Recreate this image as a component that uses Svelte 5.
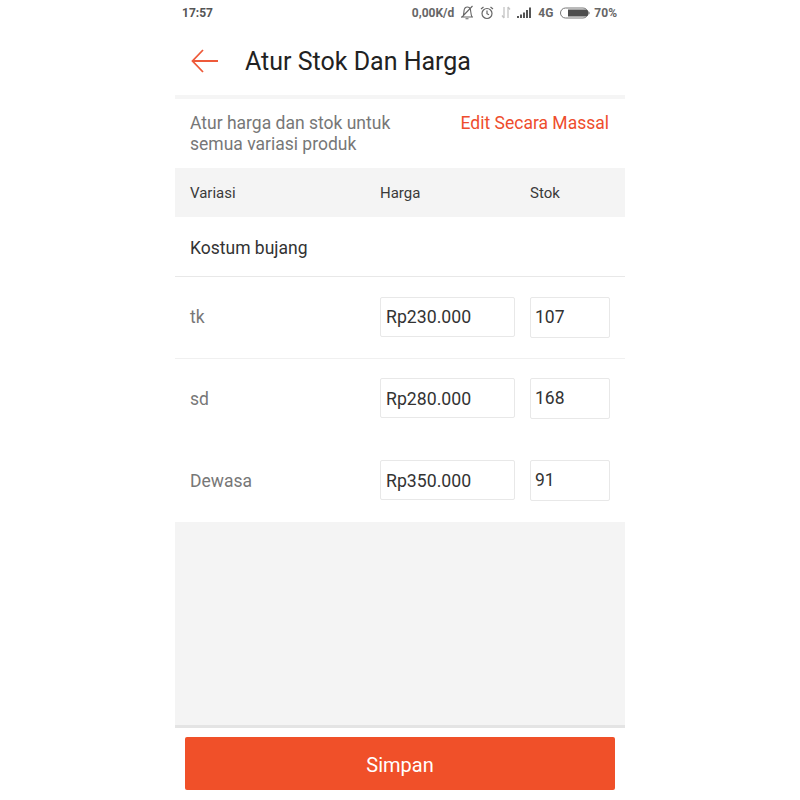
<script>
  const rows = [
    { name: 'tk', price: 'Rp230.000', stock: '107', kind: 'line' },
    { name: 'sd', price: 'Rp280.000', stock: '168', kind: '' },
    { name: 'Dewasa', price: 'Rp350.000', stock: '91', kind: 'last' }
  ];
</script>

<div class="phone">
  <div class="status">
    <span class="time">17:57</span>
    <div class="status-right">
      <span>0,00K/d</span>
      <svg class="ic bell" width="14" height="15" viewBox="0 0 14 15" fill="none" stroke="#666" stroke-width="1.100">
        <path d="M1 12h12M2.500 12c1.500-2 1.300-4 1.500-6 .2-2.500 1.500-4 3.500-4 1.300 0 2.300.7 2.800 2 .5 1.500.3 5 1.700 8M5.500 13.800h3M1.500 12.500 12.500 1" />
      </svg>
      <svg class="ic clock" width="14" height="14" viewBox="0 0 14 14" fill="none" stroke="#666" stroke-width="1.200">
        <circle cx="7" cy="7.500" r="5" />
        <path d="M7 4.500v3.200l2 1M1 3l2.500-2M13 3l-2.500-2" />
      </svg>
      <svg class="ic arrows" width="10" height="13" viewBox="0 0 10 13" fill="none" stroke="#c4c4c4" stroke-width="1.300">
        <path d="M3 1v11M3 12 1 9.500M7 12V1M7 1l2 2.500" />
      </svg>
      <svg class="ic sig" width="15" height="11" viewBox="0 0 15 11" fill="#555">
        <rect x="0" y="9" width="2" height="2" />
        <rect x="3" y="7.500" width="2" height="3.500" />
        <rect x="6" y="5.500" width="2" height="5.500" />
        <rect x="9" y="3" width="2" height="8" />
        <rect x="12" y="0.500" width="2" height="10.500" />
      </svg>
      <span class="net">4G</span>
      <svg class="ic batt" width="31" height="12" viewBox="0 0 31 12">
        <rect x="0.500" y="1" width="27.500" height="10" rx="5" fill="none" stroke="#777" />
        <path d="M8 2.500h17a3.500 3.500 0 0 1 0 7H8z" fill="#4d4d4d" />
        <path d="M29 4.500a2 2 0 0 1 0 3z" fill="#777" />
      </svg>
      <span class="pct">70%</span>
    </div>
  </div>

  <header class="appbar">
    <svg width="30" height="26" viewBox="0 0 30 26" fill="none" stroke="#ee5a3a" stroke-width="1.800">
      <path d="M2.500 13H28M13 2 2.500 13 13 24" />
    </svg>
    <h1>Atur Stok Dan Harga</h1>
  </header>

  <div class="intro">
    <p>Atur harga dan stok untuk<br />semua variasi produk</p>
    <span class="bulk">Edit Secara Massal</span>
  </div>

  <div class="cols">
    <span class="c1">Variasi</span>
    <span class="c2">Harga</span>
    <span class="c3">Stok</span>
  </div>

  <div class="group">Kostum bujang</div>

  {#each rows as r}
    <div class="row {r.kind}">
      <span class="c1 name">{r.name}</span>
      <div class="c2 box price">{r.price}</div>
      <div class="c3 box stock">{r.stock}</div>
    </div>
  {/each}

  <div class="filler"></div>

  <div class="footer">
    <button>Simpan</button>
  </div>
</div>

<style>
  :global(body) {
    background: #fff;
  }

  .phone {
    width: 450px;
    height: 800px;
    margin: 0 auto;
    display: flex;
    flex-direction: column;
    font-family: Roboto, 'Liberation Sans', sans-serif;
    background: #fff;
  }

  .status {
    height: 25px;
    flex: none;
    display: flex;
    align-items: center;
    justify-content: space-between;
    padding: 0 8px 0 7px;
    font-size: 12px;
    font-weight: 700;
    color: #666;
  }

  .time {
    color: #555;
  }

  .status-right {
    display: flex;
    align-items: center;
  }

  .ic {
    display: block;
  }

  .bell {
    margin-left: 6px;
  }

  .clock {
    margin-left: 6px;
  }

  .arrows {
    margin-left: 7px;
  }

  .sig {
    margin-left: 6px;
  }

  .net {
    margin-left: 6px;
  }

  .batt {
    margin-left: 7px;
  }

  .pct {
    margin-left: 3px;
  }

  .appbar {
    height: 74px;
    flex: none;
    box-sizing: border-box;
    display: flex;
    align-items: center;
    padding: 1px 0 0 15px;
    gap: 25px;
    border-bottom: 4px solid #f5f5f5;
  }

  h1 {
    margin: 0;
    padding-top: 2px;
    font-size: 25px;
    font-weight: 400;
    color: #222;
  }

  .intro {
    height: 69px;
    flex: none;
    box-sizing: border-box;
    display: flex;
    justify-content: space-between;
    padding: 14px 16px 0 15px;
    font-size: 17.500px;
    line-height: 21px;
  }

  .intro p {
    margin: 0;
    color: #777;
  }

  .bulk {
    color: #ee4d2d;
  }

  .cols {
    height: 49px;
    flex: none;
    display: flex;
    align-items: center;
    background: #f4f4f4;
    font-size: 15px;
    color: #3a3a3a;
  }

  .c1 {
    width: 205px;
    flex: none;
    padding-left: 15px;
    box-sizing: border-box;
  }

  .c2 {
    width: 135px;
    flex: none;
  }

  .c3 {
    flex: none;
    margin-left: 15px;
  }

  .group {
    height: 60px;
    flex: none;
    box-sizing: border-box;
    display: flex;
    align-items: center;
    padding: 3px 0 0 15px;
    font-size: 17.500px;
    color: #333;
    border-bottom: 1px solid #e8e8e8;
  }

  .row {
    flex: none;
    display: flex;
    align-items: center;
    padding: 19px 0 22px;
  }

  .row.line {
    padding: 20px 0;
    border-bottom: 1px solid #f0f0f0;
  }

  .row.last {
    padding-bottom: 21px;
  }

  .name {
    font-size: 17.500px;
    color: #777;
    padding-top: 1px;
  }

  .line .name {
    padding-top: 0;
    padding-bottom: 1px;
  }

  .box {
    height: 41px;
    box-sizing: border-box;
    display: flex;
    align-items: center;
    border: 1px solid #e8e8e8;
    border-radius: 2px;
    color: #333;
  }

  .price {
    font-size: 17.700px;
    height: 40px;
    margin-bottom: 1px;
    padding: 2px 0 0 5px;
  }

  .line .price {
    padding-top: 0;
  }

  .stock {
    width: 80px;
    font-size: 17.500px;
    padding: 0 0 2px 4px;
  }

  .filler {
    flex: 1;
    background: #f4f4f4;
    border-bottom: 3px solid #e4e4e4;
  }

  .footer {
    height: 72px;
    flex: none;
    box-sizing: border-box;
    padding: 9px 10px 0;
  }

  button {
    display: block;
    width: 100%;
    height: 53px;
    border: 0;
    border-radius: 2px;
    background: #f05029;
    color: #fff;
    font: inherit;
    font-size: 20px;
    padding: 2px 0 0;
  }
</style>
